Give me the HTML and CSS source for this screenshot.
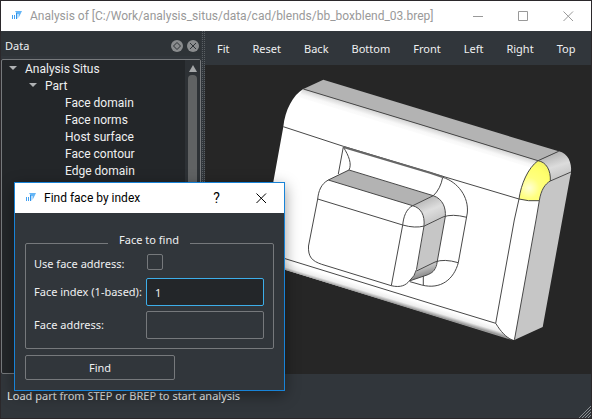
FILE: index.html
```html
<!DOCTYPE html>
<html lang="en">
<head>
<meta charset="utf-8">
<title>Analysis of [C:/Work/analysis_situs/data/cad/blends/bb_boxblend_03.brep]</title>
<link rel="stylesheet" href="styles.css">
</head>
<body>
<svg width="0" height="0" class="symbols" aria-hidden="true">
  <symbol id="logo" viewBox="0 0 12 10">
    <path d="M3 0H10L7 6V3H5Z" fill="#64b5f6"/>
    <path d="M5 3H7V6L5 8Z" fill="#b5dbfb"/>
    <path d="M0 4H1V8H0ZM2 4H3V8H2Z" fill="#42a0f0"/>
    <path d="M4 2H5V8H4Z" fill="#2f93ea"/>
  </symbol>
</svg>
<div class="window">
  <header class="titlebar">
    <svg class="logo" aria-hidden="true"><use href="#logo"/></svg>
    <h1 class="title">Analysis of [C:/Work/analysis_situs/data/cad/blends/bb_boxblend_03.brep]</h1>
    <button class="winbtn" aria-label="Minimize"><svg viewBox="0 0 11 11"><path d="M0 5.5H10"/></svg></button>
    <button class="winbtn" aria-label="Maximize"><svg viewBox="0 0 11 11"><path d="M.5 .5H9.500V9.500H.5Z"/></svg></button>
    <button class="winbtn" aria-label="Close"><svg viewBox="0 0 11 11"><path d="M.5 .5L10 10M10 .5L.5 10"/></svg></button>
  </header>
  <main class="workspace">
    <section class="dock">
      <div class="dock-head">
        <h2 class="dock-title">Data</h2>
        <button class="dockbtn" aria-label="Float"><svg viewBox="0 0 12 12"><circle cx="6" cy="6" r="6"/><path d="M6 2.500L9.500 6L6 9.500L2.500 6Z"/></svg></button>
        <button class="dockbtn" aria-label="Close panel"><svg viewBox="0 0 12 12"><circle cx="6" cy="6" r="6"/><path d="M3 3L9 9M9 3L3 9"/></svg></button>
      </div>
      <div class="tree-frame">
        <ul class="tree">
          <li><span class="node open">Analysis Situs</span>
            <ul>
              <li><span class="node open">Part</span>
                <ul>
                  <li><span class="node">Face domain</span></li>
                  <li><span class="node">Face norms</span></li>
                  <li><span class="node">Host surface</span></li>
                  <li><span class="node">Face contour</span></li>
                  <li><span class="node">Edge domain</span></li>
                </ul>
              </li>
            </ul>
          </li>
        </ul>
        <div class="scrollbar"><span class="arrow"></span><span class="thumb"></span></div>
      </div>
    </section>
    <div class="splitter"></div>
    <section class="viewer">
      <nav class="toolbar">
        <button>Fit</button><button>Reset</button><button>Back</button><button>Bottom</button><button>Front</button><button>Left</button><button>Right</button><button>Top</button>
      </nav>
      <div class="viewport">
        <svg viewBox="205 65 386 309" role="img" aria-label="Blended box model">
          <defs>
            <linearGradient id="gCorner" gradientUnits="userSpaceOnUse" x1="553" y1="155" x2="560" y2="177"><stop offset="0" stop-color="#b8b8b8"/><stop offset=".5" stop-color="#dcdcdc"/><stop offset="1" stop-color="#c6c6c6"/></linearGradient>
            <linearGradient id="gBoss" gradientUnits="userSpaceOnUse" x1="424" y1="199" x2="434" y2="222"><stop offset="0" stop-color="#b8b8b8"/><stop offset=".5" stop-color="#dedede"/><stop offset="1" stop-color="#c6c6c6"/></linearGradient>
            <linearGradient id="gFoot" gradientUnits="userSpaceOnUse" x1="424" y1="267" x2="427" y2="277"><stop offset="0" stop-color="#c4c4c4"/><stop offset="1" stop-color="#808080"/></linearGradient>
            <linearGradient id="gTop" gradientUnits="userSpaceOnUse" x1="420" y1="124.500" x2="416.500" y2="136"><stop offset="0" stop-color="#d2d2d2"/><stop offset=".5" stop-color="#f8f8f8"/><stop offset="1" stop-color="#fff"/></linearGradient>
            <linearGradient id="gBottom" gradientUnits="userSpaceOnUse" x1="400" y1="305" x2="402.400" y2="297"><stop offset="0" stop-color="#999"/><stop offset=".4" stop-color="#eee"/><stop offset="1" stop-color="#fff"/></linearGradient>
            <radialGradient id="gYellow" gradientUnits="userSpaceOnUse" cx="529" cy="188" r="30"><stop offset="0" stop-color="#ffffd8"/><stop offset=".35" stop-color="#ffff80"/><stop offset=".7" stop-color="#ffff6c"/><stop offset="1" stop-color="#f2f264"/></radialGradient>
          </defs>
          <path fill="#fff" d="M303.300 89L538 160.700L571 172L514 340L285.700 270L258 261L273.300 182L283.300 127C285 110 293 95 303.300 89Z"/>
          <path fill="url(#gTop)" d="M303.300 89L420 124.500L538 160.700L532 168L298 97Z"/>
          <path fill="url(#gBottom)" d="M270 254L495.700 323.300C501 332 506 337 512 340L285.700 270L262 262Z"/>
          <path fill="#b3b3b3" d="M303.300 89L323.300 79.700L558.700 151.300L538 160.700L420 124.500Z"/>
          <path fill="#c6c6c6" d="M550.300 181L571 172L542.700 327L514.300 340L536.500 218L539.300 200.700C541 190 545 184 550.300 181Z"/>
          <path fill="url(#gCorner)" d="M538 160.700L558.700 151.300C568 153 572 163 571 172L550.300 181C551 170 546 162 538 160.700Z"/>
          <path fill="url(#gYellow)" d="M538 160.700C546 162 551 170 550.300 181C545 184 541 190 539.300 200.700Q528 201.500 519 199C521 184 528 168 538 160.700Z"/>
          <path fill="#b3b3b3" d="M328.300 180L348.300 170L433.300 195.700L412.700 205.700Z"/>
          <path fill="url(#gBoss)" d="M412.700 205.700L433.300 195.700C443 199 446 208 445.300 216.700L424.300 226C425 215 421 208 412.700 205.700Z"/>
          <path fill="#c6c6c6" d="M424.300 226L445.300 216.700L436.700 264.500L416.500 271Z"/>
          <path fill="url(#gFoot)" d="M416.500 271L436.700 261C436 268 434 273 427 275L409.300 281Q414 277 416.500 271Z"/>
          <g class="edge">
            <path d="M303.300 89L420 124.400L538 160.700L558.700 151.300"/>
            <path d="M283.300 126.700L343.300 146.300L430 172.500L519 199"/>
            <path d="M519 199L514.300 220L495.700 323.300C501 332 506 337 512 340M495.700 323.300L430 303.300L270 254"/>
            <path d="M571 172L550.300 181M538 160.700C546 162 551 170 550.300 181C545 184 541 190 539.300 200.700L536 220L514.500 339.500"/>
            <path d="M538 160.700C528 168 521 184 519 199Q528 201.500 539.300 200.700"/>
            <path d="M343.300 147L338.300 174M343.300 147C349 156 352 164 349 170"/>
            <path d="M328.300 180L349 170L433.300 195.700L412.700 205.700L328.300 180C321 184 318.500 191 317.700 199L308.500 246C308 257 312 261 321.700 264.300L391.300 285.700C401 288 406 285 409.300 281Q415 276 416.500 269.500L424 226C425 215 421 208 412.700 205.700C406 209 403.500 217 402.700 225L391.300 285.700"/>
            <path d="M317.700 199L402.700 225Q415 228.500 424.300 226L443 217Q452 213.500 466.700 217.300"/>
            <path d="M433.300 195.700C443 199 446 208 445.300 216.700L436.700 264.500C435 271 432 273 427 275L409.300 281"/>
            <path d="M442.700 177.300Q440.500 189 433.300 195.700M442.700 177.300C458 182 469 197 467.300 213L458.300 262.700C454 279 441 290 421.700 285L410 281.700"/>
            <path d="M416.500 271L435 262Q444 258.500 458.300 262.700M423.300 276V285"/>
          </g>
          <path class="groove" d="M343.300 147L430 172.800L442.700 177"/>
        </svg>
      </div>
    </section>
  </main>
  <footer class="statusbar">
    <span>Load part from STEP or BREP to start analysis</span>
    <svg class="grip" viewBox="0 0 12 12" aria-hidden="true"><path d="M0 12L12 0M3 12L12 3M6 12L12 6M9 12L12 9"/></svg>
  </footer>
</div>
<form class="dialog" role="dialog" aria-labelledby="dlg-title">
  <header class="titlebar dialog-bar">
    <svg class="logo" aria-hidden="true"><use href="#logo"/></svg>
    <h2 class="title" id="dlg-title">Find face by index</h2>
    <button type="button" class="winbtn help" aria-label="Help">?</button>
    <button type="button" class="winbtn" aria-label="Close dialog"><svg viewBox="0 0 11 11"><path d="M.5 .5L10 10M10 .5L.5 10"/></svg></button>
  </header>
  <div class="dialog-body">
    <fieldset class="group">
      <legend>Face to find</legend>
      <div class="fields">
        <label for="use-address">Use face address:</label><input type="checkbox" class="check" id="use-address">
        <label for="index">Face index (1-based):</label><input type="text" class="text active" id="index" value="1">
        <label for="address">Face address:</label><input type="text" class="text" id="address">
      </div>
    </fieldset>
    <button type="button" class="find">Find</button>
  </div>
</form>
</body>
</html>
```
FILE: styles.css
```css
* { box-sizing: border-box; }

body {
  margin: 0;
  font: 12px/16px Roboto, "Noto Sans", sans-serif;
  color: #eff0f1;
  background: #31363b;
}

button, input { font: inherit; color: inherit; }
button { padding: 0; border: 0; background: none; }
h1, h2 { margin: 0; font: inherit; }
ul { margin: 0; padding: 0; list-style: none; }
.symbols { position: absolute; }

.window {
  display: flex;
  flex-direction: column;
  min-height: 100vh;
  border: 1px solid #2b282b;
}

.titlebar {
  display: flex;
  align-items: center;
  height: 30px;
  padding-left: 11px;
  background: #fff;
  color: #999;
}
.logo { width: 12px; height: 10px; margin-right: 6px; }
.title { flex: 1; white-space: nowrap; }
.winbtn { display: grid; place-items: center; width: 45px; height: 30px; }
.winbtn svg { width: 11px; height: 11px; fill: none; stroke: currentColor; }

.workspace { display: flex; flex: 1; }
.dock { display: flex; flex: none; flex-direction: column; width: 200px; }
.dock-head {
  display: flex;
  align-items: center;
  gap: 4px;
  height: 24px;
  margin: 1px 0 3px;
  padding: 4px 2px 0 4px;
  background: #2e3337;
}
.dock-title { flex: 1; font: 11px/16px "Noto Sans", sans-serif; }
.dockbtn { width: 12px; height: 12px; }
.dockbtn svg { display: block; fill: #8a8c8e; stroke: #2e3337; }
.dockbtn circle { stroke: none; }

.tree-frame {
  display: flex;
  flex: 1;
  border: 1px solid #76797c;
  border-radius: 2px;
  background: #232629;
}
.tree { flex: 1; padding-top: 1px; }
.tree ul { padding-left: 20px; }
.node { display: block; position: relative; height: 17px; margin-left: 23px; line-height: 17px; }
.open::before {
  content: "";
  position: absolute;
  left: -16px;
  top: 5px;
  border: 4px solid transparent;
  border-top-color: #b0b2b4;
  border-bottom: 0;
}
.scrollbar {
  display: flex;
  flex-direction: column;
  align-items: center;
  gap: 3px;
  width: 15px;
  padding-top: 5px;
  background: #2d3135;
}
.arrow { border: 4px solid transparent; border-top: 0; border-bottom: 7px solid #a5a7a9; }
.thumb { flex: 1; width: 9px; border-radius: 4px; background: #606263; }

.splitter {
  flex: none;
  width: 4px;
  background: conic-gradient(#5a5f63 25%, transparent 0) 0 0 / 2px 2px #31363b;
}

.viewer { display: flex; flex: 1; flex-direction: column; min-width: 0; }
.toolbar { display: flex; gap: 1px; height: 34px; padding-left: 1px; font: 11px/16px "Noto Sans", sans-serif; }
.toolbar button { padding: 2px 11px 0; }
.viewport { flex: 1; background: #262626; }
.viewport svg { display: block; width: 100%; }
.edge { fill: none; stroke: #484848; stroke-width: 1; }
.groove { fill: none; stroke: #666; stroke-width: 2; }

.statusbar {
  display: flex;
  align-items: center;
  justify-content: space-between;
  height: 44px;
  padding-left: 6px;
  font: 11px/16px "Noto Sans", sans-serif;
}
.grip { align-self: flex-end; width: 12px; height: 12px; stroke: #8b8f92; }

.dialog {
  position: absolute;
  left: 14px;
  top: 182px;
  width: 271px;
  border: 1px solid #1883d7;
  background: #31363b;
  box-shadow: 0 4px 14px rgba(0, 0, 0, .4);
}
.dialog-bar { padding-left: 11px; color: #000; }
.help { font-size: 14px; }
.dialog-body { padding: 19px 10px 10px; font: 11px/16px "Noto Sans", sans-serif; }
.group { min-width: 0; margin: 0 0 6px; padding: 0 9px 9px 8px; border: 1px solid #76797c; border-radius: 2px; }
.group legend { margin: 0 auto; padding: 0 11px 6px; }
.fields { display: grid; grid-template-columns: 112px 1fr; row-gap: 5px; align-items: center; }
.check {
  appearance: none;
  width: 16px;
  height: 16px;
  margin: 0 1px 3px;
  border: 1px solid #76797c;
  border-radius: 2px;
}
.text {
  width: 100%;
  height: 28px;
  padding: 0 8px;
  border: 1px solid #76797c;
  border-radius: 2px;
  background: #31363b;
  outline: 0;
}
.active { border-color: #3daee9; background: #232629; }
.find { display: block; width: 150px; height: 25px; border: 1px solid #76797c; border-radius: 2px; }
```
